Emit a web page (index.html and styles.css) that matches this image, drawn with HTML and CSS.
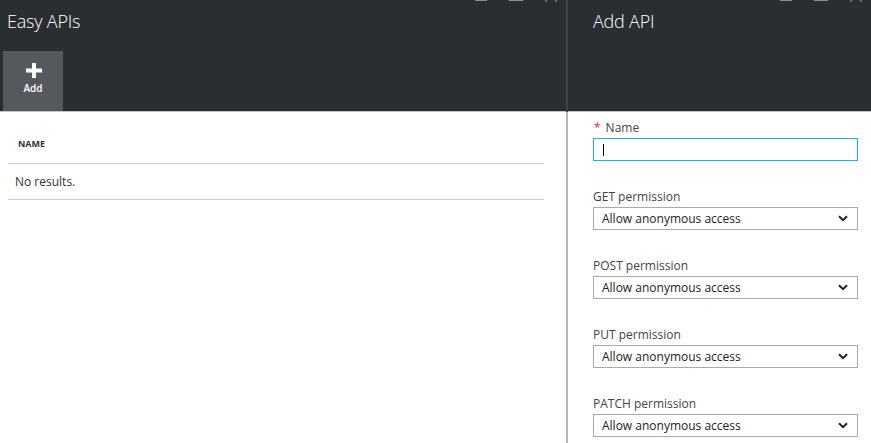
FILE: index.html
```html
<!DOCTYPE html>
<html>
<head>
<meta charset="utf-8">
<link rel="stylesheet" href="styles.css">
</head>
<body>
<div class="app">
  <section class="blade blade-list">
    <header class="blade-header">
      <div class="controls">
        <span class="ctl ctl-min"></span>
        <span class="ctl ctl-max"></span>
        <span class="ctl ctl-close"><i></i><i></i></span>
      </div>
      <h1 class="blade-title">Easy APIs</h1>
      <div class="toolbar">
        <button class="cmd">
          <svg class="cmd-icon" width="16" height="15" viewBox="0 0 16 15"><rect x="6" y="0" width="4" height="15" fill="#fff"/><rect x="0" y="5.5" width="16" height="4" fill="#fff"/></svg>
          <span class="cmd-label">Add</span>
        </button>
      </div>
    </header>
    <div class="blade-body list-body">
      <div class="grid">
        <div class="grid-head">NAME</div>
        <div class="grid-row">No results.</div>
      </div>
    </div>
  </section>
  <div class="divider"><div class="divider-top"></div><div class="divider-bottom"></div></div>
  <section class="blade blade-form">
    <header class="blade-header">
      <div class="controls">
        <span class="ctl ctl-min"></span>
        <span class="ctl ctl-max"></span>
        <span class="ctl ctl-close"><i></i><i></i></span>
      </div>
      <h1 class="blade-title form-title">Add API</h1>
    </header>
    <div class="blade-body form-body">
      <div class="field">
        <label class="field-label"><span class="req">*</span>Name</label>
        <div class="input"><span class="caret"></span></div>
      </div>
      <div class="field">
        <label class="field-label">GET permission</label>
        <div class="select"><span>Allow anonymous access</span><svg class="chev" width="10" height="7" viewBox="0 0 10 7"><polyline points="1,1.2 5,5.2 9,1.2" fill="none" stroke="#222" stroke-width="2"/></svg></div>
      </div>
      <div class="field">
        <label class="field-label">POST permission</label>
        <div class="select"><span>Allow anonymous access</span><svg class="chev" width="10" height="7" viewBox="0 0 10 7"><polyline points="1,1.2 5,5.2 9,1.2" fill="none" stroke="#222" stroke-width="2"/></svg></div>
      </div>
      <div class="field">
        <label class="field-label">PUT permission</label>
        <div class="select"><span>Allow anonymous access</span><svg class="chev" width="10" height="7" viewBox="0 0 10 7"><polyline points="1,1.2 5,5.2 9,1.2" fill="none" stroke="#222" stroke-width="2"/></svg></div>
      </div>
      <div class="field">
        <label class="field-label">PATCH permission</label>
        <div class="select"><span>Allow anonymous access</span><svg class="chev" width="10" height="7" viewBox="0 0 10 7"><polyline points="1,1.2 5,5.2 9,1.2" fill="none" stroke="#222" stroke-width="2"/></svg></div>
      </div>
    </div>
  </section>
</div>
</body>
</html>
```

FILE: styles.css
```css
html, body {
  margin: 0;
  padding: 0;
  height: 443px;
  overflow: hidden;
  background: #fff;
  font-family: "Open Sans", "Noto Sans", sans-serif;
  color: #333;
}
.app {
  display: flex;
  height: 443px;
}
.blade {
  display: flex;
  flex-direction: column;
}
.blade-list { width: 566px; }
.blade-form { flex: 1; }
.blade-header {
  position: relative;
  height: 111px;
  border-bottom: 1px solid #c4c4c4;
  background: #2a2e32;
  display: flex;
  flex-direction: column;
}
.blade-title {
  margin: 0;
  padding: 9px 0 0 7px;
  font-size: 18px;
  line-height: 24px;
  font-weight: 300;
  color: #fff;
  letter-spacing: -0.2px;
}
.form-title { padding-left: 25px; }
.controls {
  position: absolute;
  top: 0;
  right: 9px;
  display: flex;
  gap: 22px;
}
.ctl { display: block; height: 1px; background: #8b8e92; }
.ctl-min { width: 12px; }
.ctl-max { width: 14px; }
.ctl-close { width: 12px; background: none; display: flex; justify-content: space-between; }
.ctl-close i { display: block; width: 2px; height: 2px; background: #6c6f73; }
.toolbar {
  margin-top: auto;
  padding-left: 3px;
  display: flex;
}
.cmd {
  width: 60px;
  height: 60px;
  border: 0;
  padding: 12px 0 0;
  margin: 0;
  background: #55595e;
  display: flex;
  flex-direction: column;
  align-items: center;
  font-family: inherit;
  color: #fff;
}
.cmd-icon { display: block; margin-left: 2px; }
.cmd-label {
  margin-top: 3px;
  font-size: 10px;
  line-height: 14px;
  font-weight: 600;
}
.divider {
  width: 2px;
  display: flex;
  flex-direction: column;
}
.divider-top { height: 112px; background: #3f4348; }
.divider-bottom { flex: 1; background: #b6b6b6; }
.list-body {
  padding: 14px 22px 0 8px;
}
.grid-head {
  height: 35px;
  padding-bottom: 2px;
  border-bottom: 1px solid #cfcfcf;
  display: flex;
  align-items: center;
  padding-left: 10px;
  font-size: 9px;
  font-weight: 700;
  color: #333;
}
.grid-row {
  height: 35px;
  border-bottom: 1px solid #cfcfcf;
  display: flex;
  align-items: center;
  padding-left: 7px;
  font-size: 12px;
  color: #333;
}
.form-body {
  padding: 7px 13px 0 25px;
  display: flex;
  flex-direction: column;
  gap: 27px;
}
.field {
  display: flex;
  flex-direction: column;
  gap: 2px;
}
.field-label {
  padding-top: 1px;
  font-size: 12px;
  line-height: 16px;
  color: #444;
}
.req {
  color: #e0263a;
  margin-right: 5px;
  padding-left: 1px;
}
.input {
  height: 21px;
  border: 1px solid #1ab3e8;
  display: flex;
  align-items: center;
  padding-left: 9px;
}
.caret {
  display: block;
  width: 1px;
  height: 12px;
  background: #000;
}
.select {
  height: 21px;
  border: 1px solid #ababab;
  display: flex;
  align-items: center;
  justify-content: space-between;
  padding: 0 9px 0 8px;
  font-size: 12px;
  color: #222;
}
.chev { display: block; }
```
